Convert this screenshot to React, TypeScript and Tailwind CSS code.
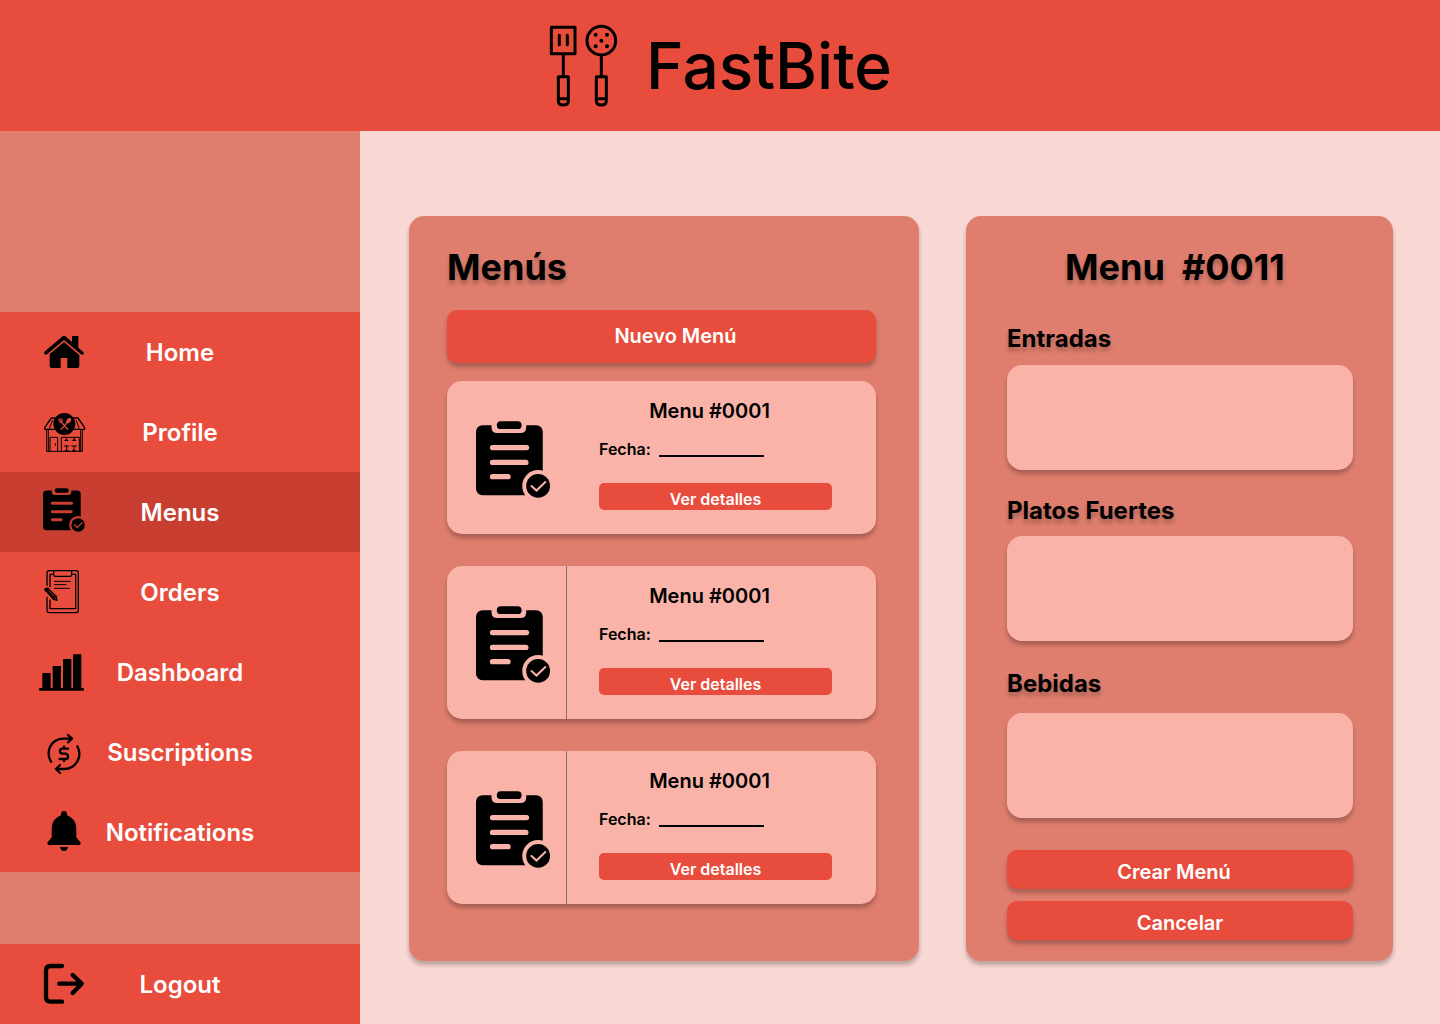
import { useId } from "react";
import type { ReactNode } from "react";

function NavIcon({ viewBox, children }: { viewBox: string; children: ReactNode }) {
  return (
    <svg viewBox={viewBox} className="size-[50px] text-[#e84c3c]" aria-hidden="true" fill="black">
      {children}
    </svg>
  );
}

function ClipboardCheck() {
  const id = useId();
  return (
    <>
      <mask id={id} maskUnits="userSpaceOnUse" x="0" y="0" width="224" height="232">
        <rect width="224" height="232" fill="white" />
        <path d="M47 0V18Q47 36 65 36H134Q152 36 152 18V0Z" fill="black" />
        <path d="M50 80H153M50 125H151M50 168H97" stroke="black" strokeWidth="16" strokeLinecap="round" />
        <circle cx="188" cy="196" r="48" fill="black" />
      </mask>
      <rect y="12" width="202" height="212" rx="20" mask={`url(#${id})`} />
      <rect x="63" width="75" height="24" rx="12" />
      <circle cx="188" cy="196" r="36" />
      <path d="M168 196L183 210L210 184" fill="none" stroke="currentColor" strokeWidth="6" strokeLinecap="round" />
    </>
  );
}

function HomeIcon() {
  return (
    <NavIcon viewBox="117 51 150 150">
      <path d="M216 78H235V113L250 126Q254 130 250 133Q247 136 243 133L192 90L141 133Q137 136 133 132Q131 128 135 124L186 80Q192 75 198 80L216 96Z" />
      <path d="M192 96L238 135V168Q238 174 232 174H202V144H182V174H155Q149 174 149 168V132Z" />
    </NavIcon>
  );
}

function ProfileIcon() {
  return (
    <NavIcon viewBox="117 291 150 150">
      <g fill="none" stroke="black" strokeWidth="4" strokeLinejoin="round">
        <path d="M168 324H154L134 353V358H254V353L234 324H218" />
        <path d="M158 330L148 356M228 330L238 356" strokeWidth="3" />
        <path d="M140 359V424H247V359M145 359V424M242 359V424" strokeWidth="3" />
        <path d="M150 424V382H173V424M184 424V382H238V424" strokeWidth="3" />
        <path d="M166 400V407" strokeWidth="3" />
        <path d="M191 408H208M214 408H231M200 408V422M222 408V422M194 422H206M216 422H228" strokeWidth="3" />
      </g>
      <path d="M198 382V387L192 393H206L200 387V382ZM221 382V387L215 393H230L224 387V382Z" />
      <circle cx="193" cy="342" r="33" />
      <g stroke="#e84c3c" fill="none" strokeWidth="4" strokeLinecap="round">
        <path d="M185 337L203 358M202 337L183 358" />
        <path d="M177 328Q174 337 185 338Q187 332 186 326M177 328L184 336M181 326L186 333" strokeWidth="3" />
      </g>
      <ellipse cx="206" cy="332" rx="6" ry="9" transform="rotate(40 206 332)" fill="#e84c3c" />
    </NavIcon>
  );
}

function MenusIcon() {
  return (
    <NavIcon viewBox="117 51 150 150">
      <g transform="translate(129 55) scale(.56)">
        <ClipboardCheck />
      </g>
    </NavIcon>
  );
}

function OrdersIcon() {
  return (
    <NavIcon viewBox="117 291 150 150">
      <g fill="none" stroke="black" strokeWidth="4" strokeLinecap="round" strokeLinejoin="round">
        <path d="M141 346V309Q141 302 148 302H228Q235 302 235 309V421Q235 428 228 428H148Q141 428 141 421V382" />
        <path d="M150 350V313H160M216 313H227V416H150V390" />
        <path d="M161 303V314Q161 319 166 319H210Q215 319 215 314V303" />
        <path d="M163 334H211M163 344H198M163 355H208" strokeWidth="3" />
        <path d="M134 358L142 354L168 379L171 391L160 387Z" />
        <path d="M139 359L163 383M138 363L146 357M160 386L168 379" strokeWidth="5" />
      </g>
    </NavIcon>
  );
}

function DashboardIcon() {
  return (
    <NavIcon viewBox="117 21 150 150">
      <rect x="127" y="99" width="25" height="48" rx="2" />
      <rect x="158" y="78" width="25" height="68" rx="2" />
      <rect x="189" y="57" width="25" height="90" rx="2" />
      <rect x="219" y="43" width="25" height="104" rx="2" />
      <rect x="117" y="144" width="135" height="8" rx="3" />
    </NavIcon>
  );
}

function SubscriptionsIcon() {
  return (
    <NavIcon viewBox="117 261 150 150">
      <g fill="none" stroke="black" strokeWidth="7" strokeLinecap="round" strokeLinejoin="round">
        <path d="M153 365Q140 342 150 321Q162 296 192 296H215M204 285L216 296L204 307" />
        <path d="M232 319Q244 342 233 362Q220 387 192 387H169M180 375L168 387L180 399" />
        <path d="M204 326H188Q180 326 180 333Q180 340 188 341H196Q204 342 204 350Q204 357 196 357H179M192 320V326M192 357V363" />
      </g>
    </NavIcon>
  );
}

function BellIcon() {
  return (
    <NavIcon viewBox="117 501 150 150">
      <path d="M183 526V521Q184 513 192 513Q200 513 201 521V526Q229 536 229 566V592L242 608Q243 615 236 615H148Q141 615 142 608L155 592V566Q155 536 183 526Z" />
      <path d="M180 621H204Q202 633 192 633Q182 633 180 621Z" />
    </NavIcon>
  );
}

function LogoutIcon() {
  return (
    <NavIcon viewBox="117 87 150 150">
      <g fill="none" stroke="black" strokeWidth="13" strokeLinecap="round" strokeLinejoin="round">
        <path d="M186 108H151Q138 108 138 121V202Q138 215 151 215H186" />
        <path d="M178 161H244M218 135L245 161L218 189" />
      </g>
    </NavIcon>
  );
}

function Utensils() {
  return (
    <svg viewBox="0 0 270 300" className="h-[100px] w-[90px]" aria-hidden="true">
      <g fill="none" stroke="black" strokeWidth="9" strokeLinejoin="round">
        <rect x="34" y="34" width="71" height="79" />
        <path d="M58 58V86M82 58V86" strokeLinecap="round" />
        <path d="M70 114V182M184 118V182" />
        <path d="M55 182H85V255Q85 267 70 267Q55 267 55 255ZM55 248H85" />
        <path d="M169 182H199V255Q199 267 184 267Q169 267 169 255ZM169 248H199" />
        <circle cx="184" cy="74" r="43" />
      </g>
      <circle cx="167" cy="56" r="6" />
      <circle cx="201" cy="56" r="6" />
      <circle cx="184" cy="74" r="6" />
      <circle cx="167" cy="91" r="6" />
      <circle cx="201" cy="91" r="6" />
    </svg>
  );
}

const navItems = [
  { label: "Home", Icon: HomeIcon },
  { label: "Profile", Icon: ProfileIcon },
  { label: "Menus", Icon: MenusIcon, active: true },
  { label: "Orders", Icon: OrdersIcon },
  { label: "Dashboard", Icon: DashboardIcon },
  { label: "Suscriptions", Icon: SubscriptionsIcon },
  { label: "Notifications", Icon: BellIcon },
];

function NavLink({ label, Icon, active }: { label: string; Icon: () => ReactNode; active?: boolean }) {
  return (
    <a
      href="#"
      aria-current={active ? "page" : undefined}
      className={`grid h-20 grid-cols-[104px_1fr_104px] items-center text-center text-2xl font-semibold text-white ${
        active ? "bg-[#c83f32]" : "bg-[#e84c3c]"
      }`}
    >
      <span className="flex justify-center pl-6">
        <Icon />
      </span>
      <span className="pt-0.5">{label}</span>
    </a>
  );
}

const menus = [
  { id: "fecha-1", divided: false },
  { id: "fecha-2", divided: true },
  { id: "fecha-3", divided: true },
];

function MenuCard({ id, divided }: { id: string; divided: boolean }) {
  return (
    <article className="flex rounded-[15px] bg-[#fab3a9] shadow-[0_4px_4px_rgba(0,0,0,0.25)]">
      <div
        className={`flex w-[120px] shrink-0 items-center border-r pt-1 pl-[29px] ${
          divided ? "border-[#8b6f6b]" : "border-transparent"
        }`}
      >
        <svg viewBox="0 0 224 232" className="h-[77px] w-[74px] text-[#fab3a9]" fill="black" aria-hidden="true">
          <ClipboardCheck />
        </svg>
      </div>
      <div className="flex-1 pt-[18px] pr-11 pb-6 pl-8">
        <h3 className="pr-3 text-center text-xl leading-6 font-semibold">Menu #0001</h3>
        <div className="mt-4 flex h-5 gap-2 leading-5">
          <label htmlFor={id} className="font-semibold">
            Fecha:
          </label>
          <input id={id} type="text" className="h-[18px] w-[105px] border-b-2 border-black bg-transparent outline-none" />
        </div>
        <button
          type="button"
          className="mt-6 block h-[27px] w-full rounded-[5px] bg-[#e84c3c] pt-1 leading-5 font-semibold text-white"
        >
          Ver detalles
        </button>
      </div>
    </article>
  );
}

const courses = [
  { id: "entradas", label: "Entradas", spacing: "mt-[35px] gap-[11px]" },
  { id: "platos", label: "Platos Fuertes", spacing: "mt-[26px] gap-2.5" },
  { id: "bebidas", label: "Bebidas", spacing: "mt-7 gap-3.5" },
];

export default function App() {
  return (
    <div className="flex min-h-screen flex-col bg-[#f9d7d2] font-['Inter',sans-serif] text-black">
      <header className="flex h-[131px] items-center justify-center gap-4 bg-[#e84c3c] pr-2">
        <Utensils />
        <span className="text-[64px] leading-none font-medium">FastBite</span>
      </header>

      <div className="flex flex-1">
        <aside className="flex w-1/4 min-w-[360px] flex-col bg-[#df7e6e]">
          <nav className="pt-[181px]">
            {navItems.map((item) => (
              <NavLink key={item.label} {...item} />
            ))}
          </nav>
          <div className="mt-auto">
            <NavLink label="Logout" Icon={LogoutIcon} />
          </div>
        </aside>

        <main className="grid flex-1 grid-cols-[510fr_427fr] items-stretch gap-[47px] pt-[85px] pr-[47px] pb-[63px] pl-[49px]">
          <section className="rounded-[15px] bg-[#df7e6e] pt-[29px] pr-[43px] pl-[38px] shadow-[0_4px_4px_rgba(0,0,0,0.25)]">
            <h1 className="text-4xl leading-[44px] font-bold text-shadow-[0_4px_4px_rgba(0,0,0,0.25)]">Menús</h1>
            <button
              type="button"
              className="mt-[21px] block h-[53px] w-full rounded-[10px] bg-[#e84c3c] pb-0.5 pl-7 text-xl font-semibold text-white shadow-[0_4px_4px_rgba(0,0,0,0.25)]"
            >
              Nuevo Menú
            </button>
            <div className="mt-[18px] flex flex-col gap-8">
              {menus.map((menu) => (
                <MenuCard key={menu.id} {...menu} />
              ))}
            </div>
          </section>

          <form className="rounded-[15px] bg-[#df7e6e] pt-[29px] pr-10 pb-5 pl-[41px] shadow-[0_4px_4px_rgba(0,0,0,0.25)]">
            <h2 className="pr-2.5 text-center text-4xl leading-[44px] font-bold whitespace-pre text-shadow-[0_4px_4px_rgba(0,0,0,0.25)]">
              {"Menu  #0011"}
            </h2>
            {courses.map((course) => (
              <div key={course.id} className={`flex flex-col ${course.spacing}`}>
                <label
                  htmlFor={course.id}
                  className="text-2xl leading-[30px] font-bold text-shadow-[0_4px_4px_rgba(0,0,0,0.25)]"
                >
                  {course.label}
                </label>
                <textarea
                  id={course.id}
                  className="h-[105px] resize-none rounded-[15px] bg-[#fab3a9] p-3 shadow-[0_4px_4px_rgba(0,0,0,0.25)] outline-none"
                />
              </div>
            ))}
            <div className="mt-8 flex flex-col gap-3 text-xl leading-6 font-semibold text-white">
              <button
                type="button"
                className="h-[39px] rounded-[10px] bg-[#e84c3c] pt-1 pr-3 shadow-[0_4px_4px_rgba(0,0,0,0.25)]"
              >
                Crear Menú
              </button>
              <button
                type="button"
                className="h-[39px] rounded-[10px] bg-[#e84c3c] pt-1 shadow-[0_4px_4px_rgba(0,0,0,0.25)]"
              >
                Cancelar
              </button>
            </div>
          </form>
        </main>
      </div>
    </div>
  );
}
